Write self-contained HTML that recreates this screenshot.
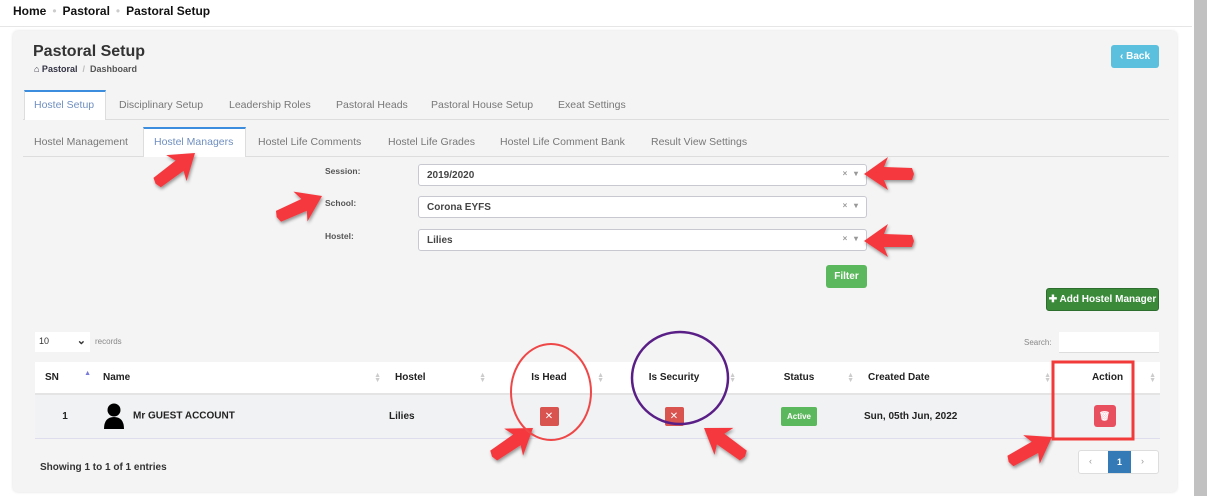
<!DOCTYPE html>
<html><head><meta charset="utf-8"><style>
*{box-sizing:border-box;margin:0;padding:0}
body{width:1207px;height:496px;background:#fff;font-family:"Liberation Sans",sans-serif;position:relative;overflow:hidden;color:#333}
.abs{position:absolute}
.top{left:0;top:0;width:1192px;height:27px;border-bottom:1px solid #e6e6e6;background:#fff;font-size:12px;font-weight:bold;color:#111;padding:4px 0 0 13px}
.top span.d{color:#ccc;margin:0 6px;font-weight:normal}
.sb{left:1194px;top:0;width:13px;height:496px;background:#c1c1c1}
.card{left:13px;top:31px;width:1164px;height:461px;background:#f4f4f4;border-radius:5px;box-shadow:0 0 3px #ddd}
.tabs{font-size:10.5px;color:#777}
.tab{position:absolute;top:0}
.btn{position:absolute;border-radius:3px;color:#fff;font-size:10px;font-weight:bold;display:flex;align-items:center;justify-content:center}
.sel{position:absolute;left:418px;width:449px;height:22px;background:#fff;border:1px solid #c8c8d0;border-radius:3px;font-size:10px;font-weight:bold;color:#444;padding:5px 0 0 8px}
.sel i{position:absolute;right:8px;top:4px;font-style:normal;color:#999;font-size:8px}
.lbl{position:absolute;left:325px;font-size:8.5px;font-weight:bold;color:#555}
table{position:absolute;left:35px;top:362px;width:1125px;border-collapse:collapse;font-size:10px;font-weight:bold;color:#222}
th{height:32px;background:#fff;border-bottom:2px solid #e4e4e4;position:relative}
td{height:44px;background:#f1f2f4;border-bottom:1px solid #dde}
th .s{position:absolute;right:4px;top:11px;color:#ccc;font-size:7px;line-height:5px}
.x{display:inline-block;width:19px;height:19px;background:#d9534f;border-radius:2px;color:#fff;font-size:10px;line-height:19px;font-weight:normal}
</style></head><body>
<div class="abs top">Home<span class="d">•</span>Pastoral<span class="d">•</span>Pastoral Setup</div>
<div class="abs sb"></div>
<div class="abs card"></div>
<div class="abs" style="left:33px;top:43px;font-size:16px;font-weight:bold;color:#333">Pastoral Setup</div>
<div class="abs" style="left:34px;top:64px;font-size:9px;font-weight:bold;color:#555"><span style="color:#334">⌂ Pastoral</span> <span style="color:#bbb">&nbsp;/&nbsp;</span> Dashboard</div>
<div class="btn" style="left:1111px;top:45px;width:48px;height:23px;background:#5bc0de">‹ Back</div>

<div class="abs" style="left:23px;top:119px;width:1146px;border-top:1px solid #ddd"></div>
<div class="abs" style="left:24px;top:90px;width:82px;height:30px;background:#fff;border-top:2px solid #3c8dde;border-left:1px solid #ddd;border-right:1px solid #ddd"></div>
<div class="abs tabs" style="top:99px;left:0;width:700px;height:14px">
<span class="tab" style="left:34px;color:#6f8fc0">Hostel Setup</span>
<span class="tab" style="left:119px">Disciplinary Setup</span>
<span class="tab" style="left:229px">Leadership Roles</span>
<span class="tab" style="left:336px">Pastoral Heads</span>
<span class="tab" style="left:431px">Pastoral House Setup</span>
<span class="tab" style="left:558px">Exeat Settings</span>
</div>
<div class="abs" style="left:23px;top:156px;width:1146px;border-top:1px solid #ddd"></div>
<div class="abs" style="left:143px;top:127px;width:103px;height:30px;background:#fff;border-top:2px solid #3c8dde;border-left:1px solid #ddd;border-right:1px solid #ddd"></div>
<div class="abs tabs" style="top:136px;left:0;width:800px;height:14px">
<span class="tab" style="left:34px">Hostel Management</span>
<span class="tab" style="left:154px;color:#6f8fc0">Hostel Managers</span>
<span class="tab" style="left:258px">Hostel Life Comments</span>
<span class="tab" style="left:388px">Hostel Life Grades</span>
<span class="tab" style="left:500px">Hostel Life Comment Bank</span>
<span class="tab" style="left:651px">Result View Settings</span>
</div>

<div class="lbl" style="top:166px">Session:</div>
<div class="lbl" style="top:198px">School:</div>
<div class="lbl" style="top:231px">Hostel:</div>
<div class="sel" style="top:164px">2019/2020<i>×&nbsp;&nbsp;&nbsp;▾</i></div>
<div class="sel" style="top:196px">Corona EYFS<i>×&nbsp;&nbsp;&nbsp;▾</i></div>
<div class="sel" style="top:229px">Lilies<i>×&nbsp;&nbsp;&nbsp;▾</i></div>
<div class="btn" style="left:826px;top:265px;width:41px;height:23px;background:#5cb85c">Filter</div>
<div class="btn" style="left:1046px;top:288px;width:113px;height:23px;background:#3a8a3a;border:1px solid #2d6d2d">✚ Add Hostel Manager</div>

<div class="abs" style="left:35px;top:332px;width:55px;height:20px;background:#fff;font-size:9px;color:#333;padding:4px 0 0 4px">10<span style="position:absolute;right:4px;top:2px;font-size:11px;font-weight:bold">⌄</span></div>
<div class="abs" style="left:95px;top:337px;font-size:8px;color:#888">records</div>
<div class="abs" style="left:1024px;top:338px;font-size:8px;color:#888">Search:</div>
<div class="abs" style="left:1059px;top:332px;width:100px;height:21px;background:#fff;border-bottom:1px solid #ddd"></div>

<table>
<tr><th style="width:60px;text-align:left;padding-left:10px">SN<span class="s" style="color:#7a7adb;top:9px">▲</span></th>
<th style="width:290px;text-align:left;padding-left:8px">Name<span class="s">▲<br>▼</span></th>
<th style="width:105px;text-align:left;padding-left:10px">Hostel<span class="s">▲<br>▼</span></th>
<th style="width:118px">Is Head<span class="s">▲<br>▼</span></th>
<th style="width:132px">Is Security<span class="s">▲<br>▼</span></th>
<th style="width:118px">Status<span class="s">▲<br>▼</span></th>
<th style="width:197px;text-align:left;padding-left:10px">Created Date<span class="s">▲<br>▼</span></th>
<th>Action<span class="s">▲<br>▼</span></th></tr>
<tr><td style="text-align:center">1</td>
<td style="padding-left:8px"><svg width="22" height="26" viewBox="0 0 22 26" style="vertical-align:middle;margin-right:8px"><circle cx="11" cy="7" r="6.5" fill="#000"/><path d="M1 26 Q1 14 11 14 Q21 14 21 26Z" fill="#000"/></svg>Mr GUEST ACCOUNT</td>
<td style="padding-left:4px">Lilies</td>
<td style="text-align:center"><span class="x">✕</span></td>
<td style="text-align:center"><span class="x">✕</span></td>
<td style="text-align:center"><span style="display:inline-block;background:#5cb85c;color:#fff;font-size:8px;padding:5px 6px;border-radius:2px">Active</span></td>
<td style="padding-left:6px">Sun, 05th Jun, 2022</td>
<td style="text-align:center"><span style="display:inline-block;width:22px;height:22px;background:#e8505f;border-radius:3px;color:#fff;line-height:22px;font-size:9px;margin-right:6px">🗑</span></td></tr>
</table>
<div class="abs" style="left:40px;top:462px;font-size:10px;font-weight:bold;color:#333">Showing 1 to 1 of 1 entries</div>
<div class="abs" style="left:1078px;top:450px;width:81px;height:24px;background:#fff;border:1px solid #ddd;border-radius:3px;font-size:9px;color:#999"><span class="abs" style="left:10px;top:5px">‹</span><span class="abs" style="left:29px;top:0;width:23px;height:22px;background:#337ab7;color:#fff;text-align:center;line-height:22px;font-weight:bold">1</span><span class="abs" style="left:62px;top:5px">›</span></div>

<svg class="abs" style="left:0;top:0" width="1207" height="496">
<defs><filter id="sh"><feDropShadow dx="1" dy="2" stdDeviation="1.5" flood-opacity="0.4"/></filter>
<polygon id="ar" points="0,0 -24,-16 -20,-6 -48,-6 -50,0 -48,6 -20,7 -24,17" fill="#f5393e"/></defs>
<g filter="url(#sh)">
<use href="#ar" transform="translate(195,153) rotate(-38)"/>
<use href="#ar" transform="translate(322,196) rotate(-25)"/>
<use href="#ar" transform="translate(864,174) rotate(180)"/>
<use href="#ar" transform="translate(864,241) rotate(180)"/>
<use href="#ar" transform="translate(533,428) rotate(-35)"/>
<use href="#ar" transform="translate(704,428) rotate(215)"/>
<use href="#ar" transform="translate(1052,437) rotate(-30)"/>
</g>
<ellipse cx="551" cy="392" rx="40" ry="48" fill="none" stroke="#ef4747" stroke-width="2"/>
<ellipse cx="680" cy="378" rx="48" ry="46" fill="none" stroke="#5a1f86" stroke-width="2.5"/>
<rect x="1053" y="362" width="80" height="77" fill="none" stroke="#f23a3a" stroke-width="3"/>
</svg>
</body></html>
